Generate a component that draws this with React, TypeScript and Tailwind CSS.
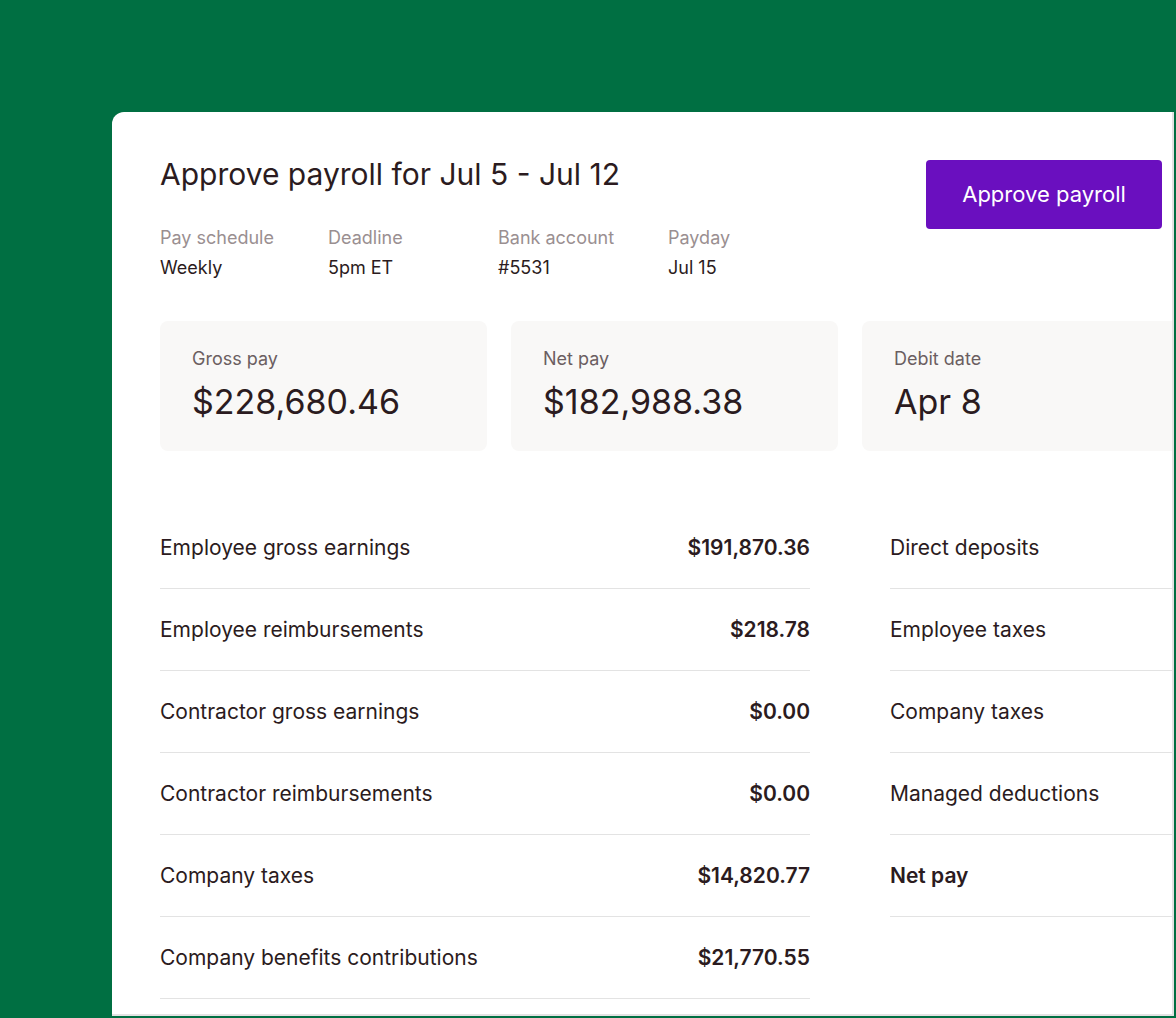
export default function App() {
  const meta = [
    ["Pay schedule", "Weekly", "w-[168px]"],
    ["Deadline", "5pm ET", "w-[170px]"],
    ["Bank account", "#5531", "w-[170px]"],
    ["Payday", "Jul 15", "w-[120px]"],
  ];
  const stats = [
    ["Gross pay", "$228,680.46"],
    ["Net pay", "$182,988.38"],
    ["Debit date", "Apr 8"],
  ];
  const left = [
    ["Employee gross earnings", "$191,870.36"],
    ["Employee reimbursements", "$218.78"],
    ["Contractor gross earnings", "$0.00"],
    ["Contractor reimbursements", "$0.00"],
    ["Company taxes", "$14,820.77"],
    ["Company benefits contributions", "$21,770.55"],
  ];
  const right = ["Direct deposits", "Employee taxes", "Company taxes", "Managed deductions"];
  return (
    <div
      className="w-[1176px] h-[1018px] overflow-hidden bg-[#006f42] text-[#2b1b20]"
      style={{ fontFamily: "Inter, 'Liberation Sans', sans-serif" }}
    >
      <div className="ml-[112px] mt-[112px] w-[1062px] h-[904px] bg-white rounded-tl-xl border-r-2 border-b-2 border-[#e3e3e3] pl-[48px] pt-[46px] overflow-hidden">
        <div className="flex justify-between w-[1002px]">
          <div>
            <h1 className="text-[30px] leading-[30px] mt-[1px]">Approve payroll for Jul 5 - Jul 12</h1>
            <div className="flex mt-[38px]">
              {meta.map(([l, v, w]) => (
                <div key={l} className={w}>
                  <div className="text-[18px] leading-[22px] text-[#9a8f91]">{l}</div>
                  <div className="text-[18px] leading-[22px] mt-[8px]">{v}</div>
                </div>
              ))}
            </div>
          </div>
          <button className="w-[236px] h-[69px] bg-[#6a0fbf] text-white text-[22px] rounded-[4px] mt-[2px]">
            Approve payroll
          </button>
        </div>
        <div className="flex gap-[24px] mt-[42px]">
          {stats.map(([l, v]) => (
            <div key={l} className="w-[327px] shrink-0 h-[130px] bg-[#f9f8f7] rounded-lg pl-[32px] pt-[27px]">
              <div className="text-[18px] leading-[22px] text-[#6b5e61]">{l}</div>
              <div className="text-[34px] leading-[40px] mt-[12px]">{v}</div>
            </div>
          ))}
        </div>
        <div className="flex gap-[80px] mt-[56px]">
          <div className="w-[650px] shrink-0">
            {left.map(([l, v]) => (
              <div key={l} className="h-[82px] flex items-center justify-between border-b border-[#e3e3e3] text-[21px]">
                <span>{l}</span>
                <span className="font-semibold">{v}</span>
              </div>
            ))}
          </div>
          <div className="w-[320px] shrink-0">
            {right.map((l) => (
              <div key={l} className="h-[82px] flex items-center border-b border-[#e3e3e3] text-[21px]">
                {l}
              </div>
            ))}
            <div className="h-[82px] flex items-center border-b border-[#e3e3e3] text-[21px] font-semibold">Net pay</div>
          </div>
        </div>
      </div>
    </div>
  );
}
